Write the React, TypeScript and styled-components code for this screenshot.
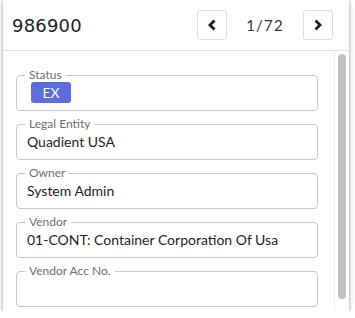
import React from 'react';
import styled, { createGlobalStyle } from 'styled-components';

const GlobalStyle = createGlobalStyle`
  *, *::before, *::after {
    box-sizing: border-box;
  }
  html, body {
    margin: 0;
    padding: 0;
    background: #ffffff;
  }
  body {
    font-family: Lato, 'Open Sans', sans-serif;
  }
`;

const Panel = styled.div`
  margin-left: 3px;
  width: 346px;
  height: 311px;
  background: #ffffff;
  box-shadow: 0 1px 4px rgba(0, 0, 0, 0.45);
  display: flex;
  flex-direction: column;
  overflow: hidden;
`;

const Header = styled.div`
  height: 51px;
  flex: none;
  display: flex;
  align-items: center;
  justify-content: space-between;
  padding: 0 16px 0 9px;
  border-bottom: 1px solid #e2e2e2;
`;

const Title = styled.h1`
  margin: 0;
  font-family: 'DejaVu Sans', Verdana, sans-serif;
  font-size: 18px;
  font-weight: normal;
  color: #222222;
  letter-spacing: 0.2px;
`;

const Pager = styled.div`
  display: flex;
  align-items: center;
`;

const NavButton = styled.button`
  width: 30px;
  height: 30px;
  padding: 0;
  display: flex;
  align-items: center;
  justify-content: center;
  background: #ffffff;
  border: 1px solid #dedede;
  border-radius: 3px;
  cursor: pointer;
`;

const PageText = styled.span`
  width: 76px;
  text-align: center;
  font-family: Lato, sans-serif;
  font-size: 15px;
  letter-spacing: 1.2px;
  color: #333333;
`;

const Body = styled.div`
  flex: 1;
  min-height: 0;
  display: flex;
  overflow: hidden;
`;

const Content = styled.div`
  flex: 1;
  min-width: 0;
  padding: 17px 16px 12px 13px;
  display: flex;
  flex-direction: column;
  gap: 6px;
`;

const ScrollTrack = styled.div`
  flex: none;
  width: 15px;
  border-left: 1px solid #ebebeb;
  padding: 3px 3px 12px 3px;
  display: flex;
`;

const ScrollThumb = styled.div`
  flex: 1;
  background: #c1c1c1;
  border-radius: 4px;
`;

const Field = styled.fieldset`
  margin: 0;
  flex: none;
  min-width: 0;
  border: 1px solid #c8c8c8;
  border-radius: 4px;
  padding: 0 10px 7px;
`;

const Legend = styled.legend`
  margin-left: -2px;
  padding: 0 4px;
  font-size: 12px;
  line-height: 14px;
  color: #6e6e6e;
`;

const Value = styled.div`
  height: 21px;
  line-height: 21px;
  font-size: 14px;
  color: #1e1e1e;
  white-space: nowrap;
`;

const Chip = styled.span`
  display: inline-flex;
  align-items: center;
  justify-content: center;
  margin-left: 4px;
  width: 40px;
  height: 21px;
  border-radius: 3px;
  background: #5b6ddf;
  color: #ffffff;
  font-size: 14px;
`;

const Chevron = ({ dir }: { dir: 'left' | 'right' }) => (
  <svg width="12" height="14" viewBox="0 0 12 14">
    <polyline
      points={dir === 'left' ? '8.5,2.5 4,7 8.5,11.5' : '3.5,2.5 8,7 3.5,11.5'}
      fill="none"
      stroke="#1a1a1a"
      strokeWidth="2.8"
      strokeLinejoin="miter"
    />
  </svg>
);

const fields: { label: string; value?: string; chip?: string }[] = [
  { label: 'Status', chip: 'EX' },
  { label: 'Legal Entity', value: 'Quadient USA' },
  { label: 'Owner', value: 'System Admin' },
  { label: 'Vendor', value: '01-CONT: Container Corporation Of Usa' },
  { label: 'Vendor Acc No.', value: '' },
];

const App = () => (
  <>
    <GlobalStyle />
    <Panel>
      <Header>
        <Title>986900</Title>
        <Pager>
          <NavButton aria-label="Previous">
            <Chevron dir="left" />
          </NavButton>
          <PageText>1/72</PageText>
          <NavButton aria-label="Next">
            <Chevron dir="right" />
          </NavButton>
        </Pager>
      </Header>
      <Body>
        <Content>
          {fields.map((f) => (
            <Field key={f.label}>
              <Legend>{f.label}</Legend>
              <Value>{f.chip ? <Chip>{f.chip}</Chip> : f.value}</Value>
            </Field>
          ))}
        </Content>
        <ScrollTrack>
          <ScrollThumb />
        </ScrollTrack>
      </Body>
    </Panel>
  </>
);

export default App;
